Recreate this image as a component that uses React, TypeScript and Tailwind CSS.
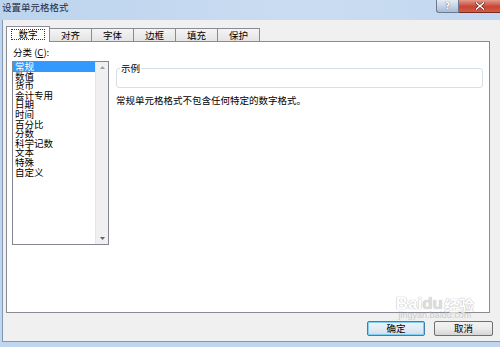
import React from "react";

const font = { fontFamily: '"Noto Sans CJK SC", "Noto Sans", sans-serif' };

const items = ["常规", "数值", "货币", "会计专用", "日期", "时间", "百分比", "分数", "科学记数", "文本", "特殊", "自定义"];
const tabs = ["对齐", "字体", "边框", "填充", "保护"];

function TitleBar() {
  return (
    <div className="h-[20px] w-full flex shrink-0 bg-[rgb(192,214,239)] bg-[linear-gradient(to_right,rgb(188,212,238),rgb(202,220,241)_60%,rgb(194,216,240))]">
      <div className="pl-[2px] pt-[2px] text-[9.5px] leading-[10px] text-[#1e2a3a] grow">设置单元格格式</div>
      <div className="w-[23px] h-[13px] shrink-0 rounded-bl-[3px] border border-t-0 border-[#6b7a90] bg-[rgb(176,193,214)] bg-[linear-gradient(to_bottom,rgb(227,235,244),rgb(169,188,211))] flex items-center justify-center text-[9px] leading-none font-bold text-white [text-shadow:0_0_1px_rgb(50,60,80)]" style={{ fontFamily: '"DejaVu Sans", sans-serif' }}>?</div>
      <div className="w-[41px] h-[13px] shrink-0 border-b border-[#7a2a20] bg-[rgb(204,74,56)] bg-[linear-gradient(to_bottom,rgb(228,154,140),rgb(199,69,52)_55%,rgb(213,91,67))] flex items-center justify-center">
        <svg width="10" height="8" viewBox="0 0 10 8">
          <path d="M1.5 1 L8.5 7 M8.5 1 L1.5 7" stroke="#5a1a12" strokeWidth="2.6" strokeLinecap="square" />
          <path d="M1.5 1 L8.5 7 M8.5 1 L1.5 7" stroke="#ffffff" strokeWidth="1.6" strokeLinecap="square" />
        </svg>
      </div>
    </div>
  );
}

export default function App() {
  return (
    <div className="w-[500px] h-[347px] overflow-hidden flex flex-col bg-[rgb(192,214,239)] text-[9.5px] text-black" style={font}>
      <TitleBar />

      {/* Client area */}
      <div className="ml-[2px] h-[322px] shrink-0 bg-[#f0f0f0] border-l border-b border-[#8497b0] flex flex-col">
        {/* Tabs */}
        <div className="pt-[6px] pl-[3px] flex items-end h-[21px] shrink-0 relative z-10">
          <div className="w-[44px] h-[16px] -mb-px bg-white border border-b-0 border-[#898c95] flex items-center justify-center">
            <span className="border border-dotted border-[#333] px-[6px] leading-[9px] h-[11px] flex items-center">数字</span>
          </div>
          {tabs.map((t) => (
            <div
              key={t}
              className="w-[43px] h-[13px] -ml-px first:ml-0 bg-[#ebebeb] bg-[linear-gradient(to_bottom,rgb(244,244,244),rgb(228,228,228))] border border-b-0 border-[#898c95] flex items-center justify-center leading-[10px]"
            >
              {t}
            </div>
          ))}
        </div>

        {/* Panel */}
        <div className="ml-[3px] w-[484px] h-[272px] shrink-0 bg-white border border-[#898c95] flex pt-[5px] pl-[5px]">
          <div className="flex flex-col">
            <div className="leading-[10px] h-[10px] mb-[4px] pl-[1px]">分类 (<span className="underline">C</span>):</div>
            <div className="w-[97px] h-[184px] border border-[#828790] flex">
              <div className="flex-1 flex flex-col">
                {items.map((it, i) => (
                  <div
                    key={it}
                    className={
                      i === 0
                        ? "h-[9.6px] leading-[9.6px] bg-[#3399ff] text-white pl-[2px]"
                        : "h-[9.6px] leading-[9.6px] pl-[2px]"
                    }
                  >
                    {it}
                  </div>
                ))}
              </div>
              <div className="w-[13px] bg-[#f0f0f0] border-l border-[#e6e6e6] flex flex-col justify-between items-center py-[4px]">
                <svg width="5" height="3" viewBox="0 0 5 3"><path d="M2.5 0 L5 3 L0 3 Z" fill="#9aa0a8" /></svg>
                <svg width="5" height="3" viewBox="0 0 5 3"><path d="M0 0 L5 0 L2.5 3 Z" fill="#60656c" /></svg>
              </div>
            </div>
          </div>

          <div className="ml-[7px] pt-[17px] flex flex-col w-[367px]">
            <fieldset className="h-[24px] border border-[#d5dfe5] rounded-[3px] px-[3px] m-0">
              <legend className="px-[1px] leading-[9px] text-[9.5px]">示例</legend>
            </fieldset>
            <div className="mt-[7px] leading-[10px]">常规单元格格式不包含任何特定的数字格式。</div>
          </div>
        </div>

        {/* Buttons */}
        <div className="flex justify-end gap-[9px] pr-[7px] pt-[8px] relative">
          <div className="w-[58px] h-[15px] rounded-[2px] border border-[#3c7fb1] bg-[#e8e8e8] bg-[linear-gradient(to_bottom,rgb(236,244,250),rgb(226,236,244)_50%,rgb(208,222,234))] flex items-center justify-center leading-none shadow-[inset_0_0_0_1px_#7fd0f3]">
            确定
          </div>
          <div className="w-[59px] h-[15px] rounded-[2px] border border-[#707070] bg-[#e6e6e6] bg-[linear-gradient(to_bottom,rgb(242,242,242),rgb(235,235,235)_50%,rgb(214,214,214))] flex items-center justify-center leading-none">
            取消
          </div>
          <div className="absolute right-[26px] -top-[18px] flex flex-col items-center pointer-events-none opacity-70">
            <div className="flex items-end leading-none">
              <span className="text-[17px] font-bold text-white [text-shadow:0_0_1px_#9a9a9a,0_0_1px_#9a9a9a]" style={{ fontFamily: '"Liberation Sans", sans-serif' }}>Bai</span>
              <span className="text-[17px] font-bold text-[#d0d0d0] [text-shadow:0_0_1px_#9a9a9a]" style={{ fontFamily: '"Liberation Sans", sans-serif' }}>du</span>
              <span className="text-[15px] font-bold text-white ml-[1px] [text-shadow:0_0_1px_#9a9a9a,0_0_1px_#9a9a9a]">经验</span>
            </div>
            <div className="text-[9px] leading-none text-[#bbbbbb] -mt-[1px]" style={{ fontFamily: '"Liberation Sans", sans-serif' }}>jingyan.baidu.com</div>
          </div>
        </div>
      </div>
      <div className="flex-1 bg-[rgb(192,214,239)]" />
    </div>
  );
}
